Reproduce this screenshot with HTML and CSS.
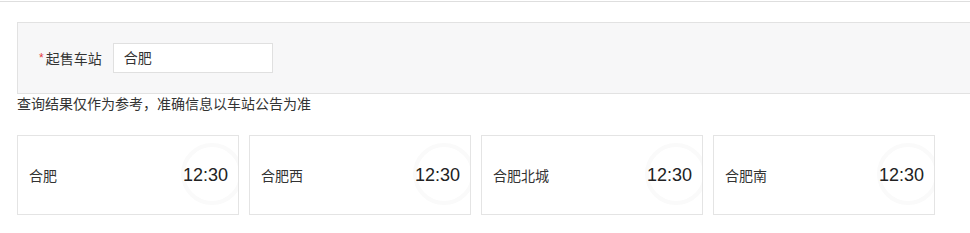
FILE: index.html
```html
<!DOCTYPE html>
<html lang="zh-CN">
<head>
	<meta charset="UTF-8">
	<title>起售车站</title>

	<link rel="stylesheet" href="styles.css">
</head>
<body>

<div class="top-line"></div>

<div class="page">
	<div class="search-box">
		<label class="field-label"><span class="req">*</span>起售车站</label>
		<div class="field-input">合肥</div>
	</div>

	<div class="notice">查询结果仅作为参考，准确信息以车站公告为准</div>

	<div class="station-list">
		<div class="station-card">
			<span class="name">合肥</span>
			<span class="time">12:30</span>
			<span class="clock"></span>
		</div>
		<div class="station-card">
			<span class="name">合肥西</span>
			<span class="time">12:30</span>
			<span class="clock"></span>
		</div>
		<div class="station-card">
			<span class="name">合肥北城</span>
			<span class="time">12:30</span>
			<span class="clock"></span>
		</div>
		<div class="station-card">
			<span class="name">合肥南</span>
			<span class="time">12:30</span>
			<span class="clock"></span>
		</div>
	</div>
</div>

</body>
</html>
```

FILE: styles.css
```css
html, body {
	margin: 0;
	background: #fff;
	color: #333;
	font-size: 14px;
	font-family: "Liberation Sans", "Noto Sans CJK SC", sans-serif;
}

.top-line {
	margin-top: 1px;
	height: 1px;
	background: #dedede;
}

.page {
	padding: 20px 0 0 17px;
}

.search-box {
	display: flex;
	align-items: center;
	gap: 11px;
	padding: 20px 0 20px 21px;
	background: #f7f7f8;
	border: 1px solid #e2e2e2;
	border-right: none;
}

.field-label {
	line-height: 20px;
}

.req {
	color: #e4393c;
	font-size: 12px;
	margin-right: 2px;
	vertical-align: 2px;
}

.field-input {
	box-sizing: border-box;
	width: 160px;
	height: 30px;
	line-height: 28px;
	padding-left: 10px;
	background: #fff;
	border: 1px solid #e0e0e0;
}

.notice {
	line-height: 20px;
}

.station-list {
	display: flex;
	gap: 10px;
	margin-top: 21px;
}

.station-card {
	position: relative;
	box-sizing: border-box;
	width: 222px;
	height: 80px;
	display: flex;
	align-items: center;
	justify-content: space-between;
	padding: 0 10px 0 11px;
	border: 1px solid #e4e4e4;
	overflow: hidden;
}

.name {
	position: relative;
	z-index: 1;
}

.time {
	position: relative;
	z-index: 1;
	font-size: 18px;
	color: #222;
}

.clock {
	position: absolute;
	left: 163px;
	top: 7px;
	width: 54px;
	height: 54px;
	border: 4px solid #fafafa;
	border-radius: 50%;
}
```
